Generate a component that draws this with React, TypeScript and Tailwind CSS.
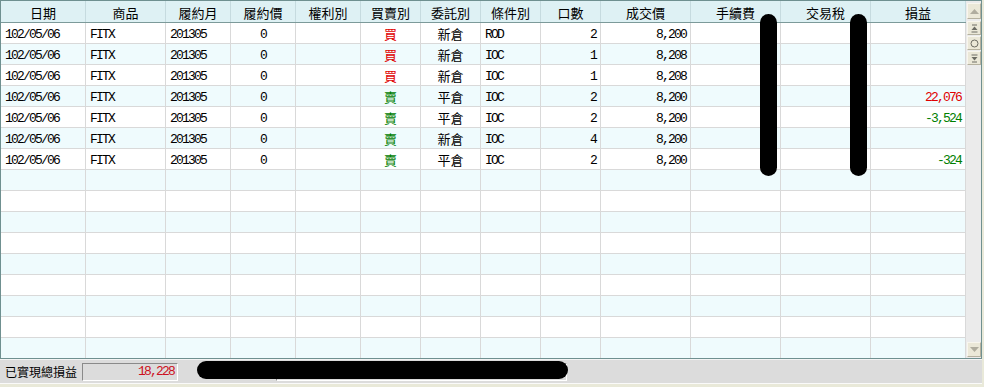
import React from 'react';

type Col = { title: string; w: string; align: 'left' | 'center' | 'right'; latin?: boolean };

const cols: Col[] = [
  { title: '日期', w: 'w-[85px]', align: 'left', latin: true },
  { title: '商品', w: 'w-[80px]', align: 'left', latin: true },
  { title: '履約月', w: 'w-[65px]', align: 'left', latin: true },
  { title: '履約價', w: 'w-[65px]', align: 'center', latin: true },
  { title: '權利別', w: 'w-[65px]', align: 'center' },
  { title: '買賣別', w: 'w-[60px]', align: 'center' },
  { title: '委託別', w: 'w-[60px]', align: 'center' },
  { title: '條件別', w: 'w-[60px]', align: 'left', latin: true },
  { title: '口數', w: 'w-[60px]', align: 'right', latin: true },
  { title: '成交價', w: 'w-[90px]', align: 'right', latin: true },
  { title: '手續費', w: 'w-[90px]', align: 'right', latin: true },
  { title: '交易稅', w: 'w-[90px]', align: 'right', latin: true },
  { title: '損益', w: 'w-[95px]', align: 'right', latin: true },
];

type Cell = { text: string; color?: string };

const RED = 'text-[#e00000]';
const GREEN = 'text-[#008000]';

const mk = (side: string, open: string, cond: string, qty: string, price: string, pl: string, plColor?: string): Cell[] => [
  { text: '102/05/06' },
  { text: 'FITX' },
  { text: '201305' },
  { text: '0' },
  { text: '' },
  { text: side, color: side === '買' ? RED : GREEN },
  { text: open },
  { text: cond },
  { text: qty },
  { text: price },
  { text: '' },
  { text: '' },
  { text: pl, color: plColor },
];

const rows: Cell[][] = [
  mk('買', '新倉', 'ROD', '2', '8,200', ''),
  mk('買', '新倉', 'IOC', '1', '8,208', ''),
  mk('買', '新倉', 'IOC', '1', '8,208', ''),
  mk('賣', '平倉', 'IOC', '2', '8,200', '22,076', RED),
  mk('賣', '平倉', 'IOC', '2', '8,200', '-3,524', GREEN),
  mk('賣', '新倉', 'IOC', '4', '8,200', ''),
  mk('賣', '平倉', 'IOC', '2', '8,200', '-324', GREEN),
];

const alignCls = { left: 'justify-start pl-[4px]', center: 'justify-center', right: 'justify-end pr-[4px]' };

function ScrollBtn({ children, className = '' }: { children: React.ReactNode; className?: string }) {
  return (
    <div className={`w-[14px] h-[14px] bg-[#ebe8d8] border-r border-b border-[#b5b19f] border-t border-l border-t-[#f8f6ee] border-l-[#f8f6ee] flex items-center justify-center ${className}`}>
      {children}
    </div>
  );
}

export default function App() {
  const empty: Cell[][] = Array.from({ length: 9 }, () => cols.map(() => ({ text: '' })));
  const all = [...rows, ...empty];

  return (
    <div className="w-[984px] h-[387px] bg-[#e9e9d9] relative overflow-hidden font-['Noto_Sans_CJK_TC',sans-serif] text-black">
      {/* grid panel */}
      <div className="w-[982px] h-[359px] border border-[#6f9090] flex overflow-hidden bg-white">
        <div className="w-[965px] flex flex-col">
          <div className="flex h-[22px] shrink-0 bg-[#def1f4] border-b border-[#7c9a9a]">
            {cols.map((c, i) => (
              <div key={i} className={`${c.w} shrink-0 border-r border-[#c6dbdf] flex items-center justify-center pt-[1px] text-[13px] leading-none`}>
                {c.title}
              </div>
            ))}
          </div>
          {all.map((r, ri) => (
            <div key={ri} className={`flex h-[21px] shrink-0 border-b border-[#d9d9d9] ${ri % 2 === 1 ? 'bg-[#effbfd]' : 'bg-white'}`}>
              {r.map((cell, ci) => {
                const c = cols[ci];
                const latin = c.latin && !/[\u4e00-\u9fff]/.test(cell.text);
                return (
                  <div
                    key={ci}
                    className={`${c.w} shrink-0 border-r border-[#d9d9d9] flex items-center ${alignCls[c.align]} ${cell.color ?? ''} leading-none ${
                      latin ? "font-['Liberation_Mono',monospace] text-[13px] tracking-[-1.8px] pt-[2px]" : 'text-[13px] pt-[1px]'
                    }`}
                  >
                    {cell.text}
                  </div>
                );
              })}
            </div>
          ))}
        </div>
        {/* vertical scrollbar */}
        <div className="w-[15px] bg-[#ebebeb] flex flex-col pt-[2px] pl-[1px]">
          <ScrollBtn className="h-[16px]">
            <svg width="9" height="5" viewBox="0 0 9 5"><path d="M0 5 L4.5 0 L9 5 Z" fill="#b0ad9f" /></svg>
          </ScrollBtn>
          <ScrollBtn className="mt-[2px]">
            <svg width="9" height="9" viewBox="0 0 9 9"><path d="M2 1 H7 M1.5 8 H7.5" stroke="#6c6c64" strokeWidth="1" /><path d="M1.5 6 L4.5 2.5 L7.5 6 Z" fill="#6c6c64" /></svg>
          </ScrollBtn>
          <ScrollBtn className="mt-[1px]">
            <svg width="9" height="9" viewBox="0 0 9 9"><circle cx="4.5" cy="4.5" r="3.5" fill="none" stroke="#6c6c64" strokeWidth="1" /></svg>
          </ScrollBtn>
          <ScrollBtn className="mt-[1px]">
            <svg width="9" height="9" viewBox="0 0 9 9"><path d="M1.5 1 H7.5 M2 8 H7" stroke="#6c6c64" strokeWidth="1" /><path d="M1.5 3 L4.5 6.5 L7.5 3 Z" fill="#6c6c64" /></svg>
          </ScrollBtn>
          <div className="flex-1" />
          <ScrollBtn className="h-[15px] mb-[1px]">
            <svg width="9" height="5" viewBox="0 0 9 5"><path d="M0 0 L4.5 5 L9 0 Z" fill="#b0ad9f" /></svg>
          </ScrollBtn>
        </div>
      </div>

      {/* status bar */}
      <div className="w-[982px] h-[25px] bg-[#dcdcdc] border-t border-[#f4f4f4] border-b border-b-[#fafafa] flex items-center pl-[5px]">
        <span className="text-[12px] leading-none">已實現總損益</span>
        <div className="ml-[5px] w-[96px] h-[18px] border border-t-[#8a8a8a] border-l-[#8a8a8a] border-r-white border-b-white bg-[#dcdcdc] flex items-center justify-end pr-[3px] pt-[1px] font-['Liberation_Mono',monospace] text-[13px] tracking-[-1.8px] text-[#cc1020]">
          18,228
        </div>
        <div className="ml-[98px] w-[291px] h-[18px] border border-t-[#8a8a8a] border-l-[#8a8a8a] border-r-white border-b-white bg-[#dcdcdc]" />
      </div>

      {/* redaction marks */}
      <div className="absolute left-[760px] top-[14px] w-[17px] h-[162px] rounded-full bg-black" />
      <div className="absolute left-[850px] top-[14px] w-[17px] h-[162px] rounded-full bg-black" />
      <div className="absolute left-[197px] top-[361px] w-[371px] h-[18px] rounded-full bg-black" />
    </div>
  );
}
